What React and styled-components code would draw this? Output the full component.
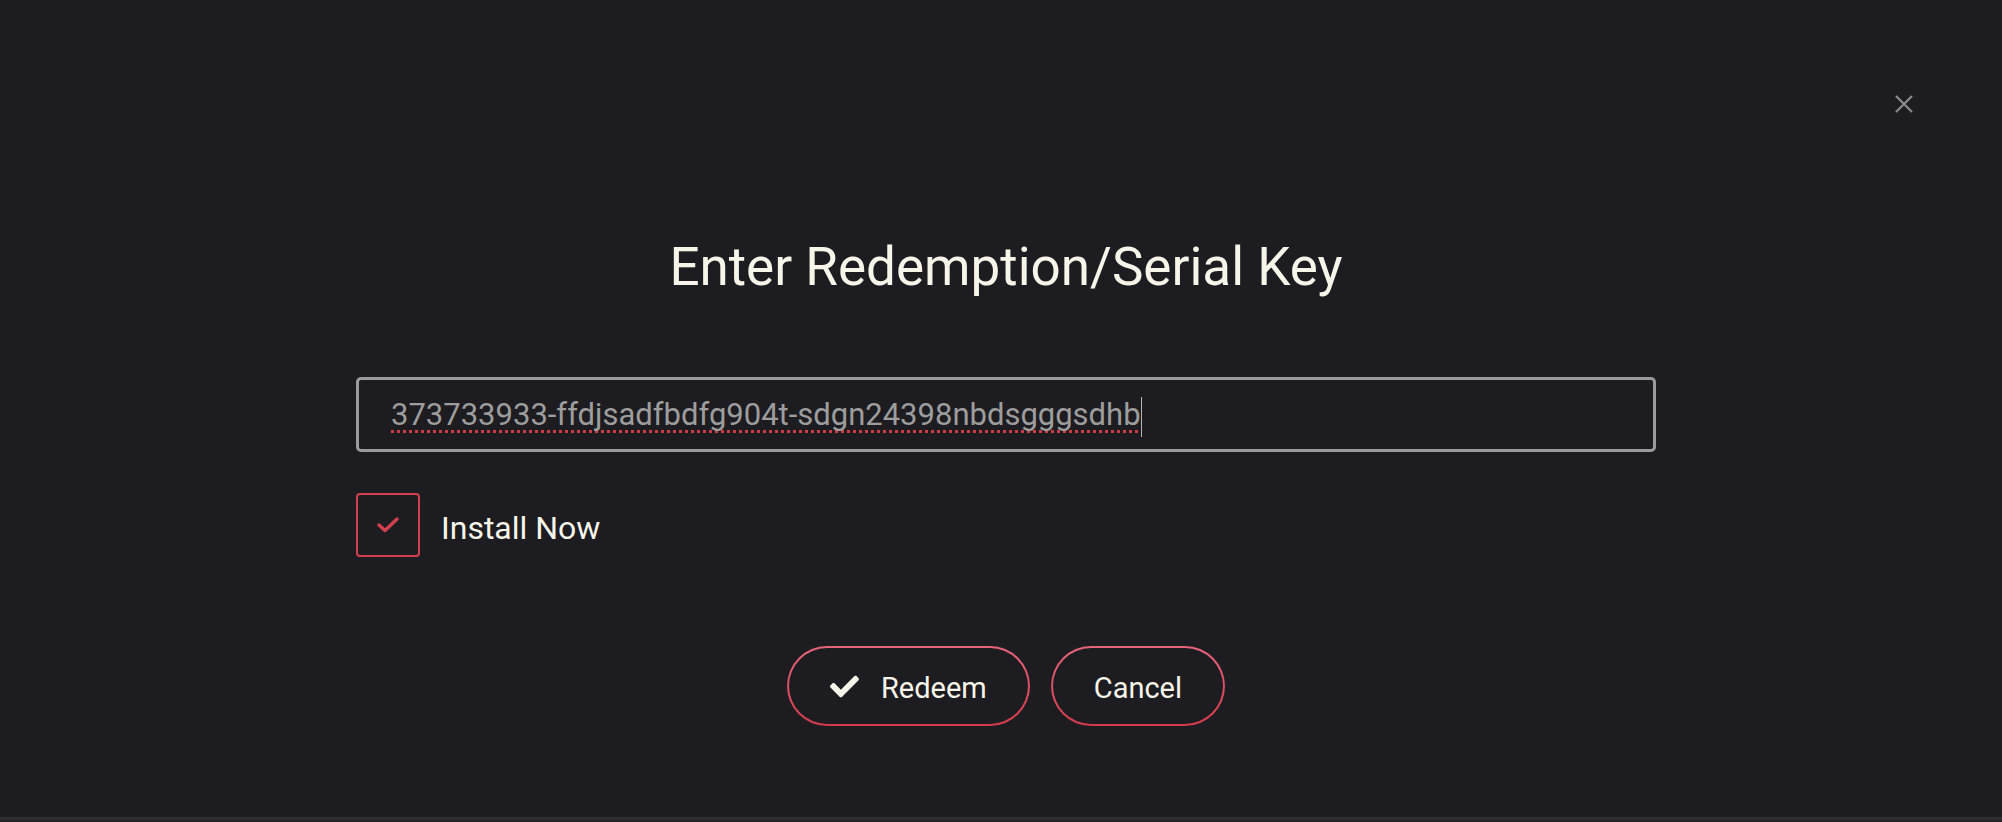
import React from 'react'
import styled, { createGlobalStyle } from 'styled-components'
import { FaCheck } from 'react-icons/fa'

const Global = createGlobalStyle`
  *,
  *::before,
  *::after {
    margin: 0;
    padding: 0;
    box-sizing: border-box;
  }

  body {
    background-color: #1d1c21;
    font-family: Roboto, "Liberation Sans", sans-serif;
  }
`

const Page = styled.div`
  width: 100vw;
  height: 100vh;
  display: flex;
  flex-direction: column;
  background-color: #1d1c21;
  overflow: hidden;
`

const TopBar = styled.div`
  display: flex;
  justify-content: flex-end;
  padding: 93px 87px 0 0;
`

const CloseButton = styled.button`
  width: 22px;
  height: 22px;
  display: flex;
  align-items: center;
  justify-content: center;
  background: none;
  border: none;
  color: #8c8c8e;
  cursor: pointer;
`

const Body = styled.div`
  flex: 1;
  display: flex;
  justify-content: center;
  padding-left: 10px;
`

const Form = styled.div`
  width: 1300px;
  display: flex;
  flex-direction: column;
`

const Title = styled.h1`
  margin-top: 121px;
  font-size: 53px;
  line-height: 62px;
  font-weight: 400;
  text-align: center;
  color: #f7f5e9;
`

const KeyField = styled.div`
  margin-top: 79px;
  height: 75px;
  display: flex;
  align-items: center;
  padding: 0 32px;
  border: 3px solid #9b9b9b;
  border-radius: 5px;
`

const KeyText = styled.span`
  font-size: 31px;
  line-height: 36px;
  color: #9d9d9d;
  text-decoration: underline dotted #d13c44;
  text-decoration-thickness: 3px;
  text-decoration-skip-ink: none;
  text-underline-offset: 5px;
`

const Caret = styled.span`
  width: 1px;
  height: 40px;
  margin-top: 4px;
  background-color: #b5b5b5;
`

const CheckRow = styled.label`
  margin-top: 41px;
  display: flex;
  align-items: center;
  gap: 21px;
  cursor: pointer;
`

const Box = styled.span`
  width: 64px;
  height: 64px;
  display: flex;
  align-items: center;
  justify-content: center;
  border: 2px solid #d2404d;
  border-radius: 4px;
  color: #d2404d;
`

const Label = styled.span`
  padding-top: 5px;
  font-size: 32px;
  line-height: 36px;
  color: #f7f5e9;
`

const Actions = styled.div`
  margin-top: 89px;
  display: flex;
  justify-content: center;
  gap: 21px;
`

const Pill = styled.button`
  height: 80px;
  display: flex;
  align-items: center;
  gap: 22px;
  padding: 4px 41px 0;
  border: 2px solid transparent;
  border-radius: 40px;
  background:
    linear-gradient(#1d1c21, #1d1c21) padding-box,
    linear-gradient(#e5657b, #d43b4a) border-box;
  color: #f7f5e9;
  font-family: inherit;
  font-size: 29px;
  cursor: pointer;

  svg {
    margin-top: -4px;
  }
`

const Footer = styled.div`
  height: 5px;
  border-top: 3px solid #2d2d31;
  background-color: #242428;
`

export default function App() {
  return (
    <>
      <Global />
      <Page>
        <TopBar>
          <CloseButton aria-label="Close">
            <svg width="18" height="18" viewBox="0 0 18 18">
              <path d="M1 1 L17 17 M17 1 L1 17" stroke="currentColor" strokeWidth="2.2" />
            </svg>
          </CloseButton>
        </TopBar>

        <Body>
          <Form>
            <Title>Enter Redemption/Serial Key</Title>

            <KeyField>
              <KeyText>373733933-ffdjsadfbdfg904t-sdgn24398nbdsgggsdhb</KeyText>
              <Caret />
            </KeyField>

            <CheckRow>
              <Box>
                <svg width="22" height="16" viewBox="0 0 22 16">
                  <polyline
                    points="2,8 8,13.5 20,2"
                    fill="none"
                    stroke="currentColor"
                    strokeWidth="3.4"
                    strokeLinecap="round"
                    strokeLinejoin="round"
                  />
                </svg>
              </Box>
              <Label>Install Now</Label>
            </CheckRow>

            <Actions>
              <Pill>
                <FaCheck size={29} />
                Redeem
              </Pill>
              <Pill>Cancel</Pill>
            </Actions>
          </Form>
        </Body>

        <Footer />
      </Page>
    </>
  )
}
